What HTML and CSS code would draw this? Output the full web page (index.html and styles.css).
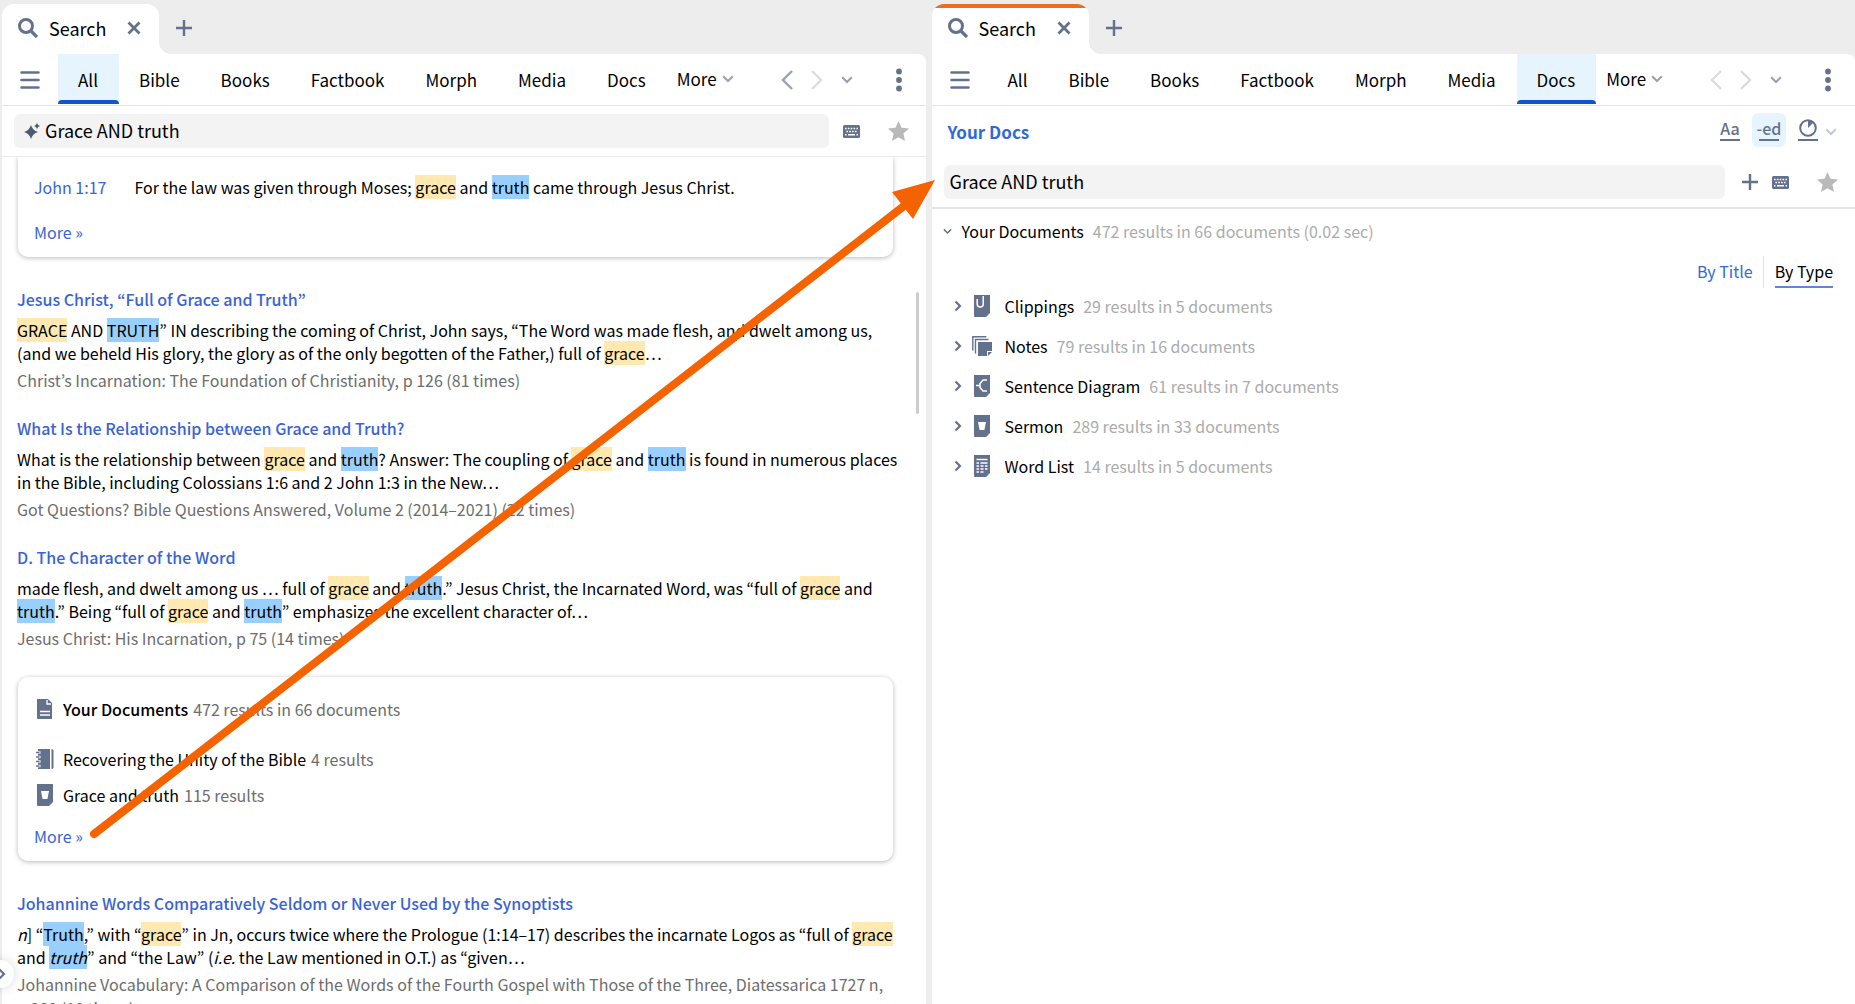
FILE: index.html
```html
<!DOCTYPE html>
<html lang="en">
<head>
<meta charset="utf-8">
<title>Search</title>
<link rel="stylesheet" href="styles.css">
</head>
<body>
<svg class="sprite" aria-hidden="true">
  <symbol id="i-search" viewBox="0 0 20 20"><circle cx="8" cy="8" r="6.5" fill="none" stroke="currentColor" stroke-width="3"/><path d="M13 13l6 6" stroke="currentColor" stroke-width="3.2" fill="none"/></symbol>
  <symbol id="i-close" viewBox="0 0 14 14"><path d="M1.500 1.500l11 11M12.500 1.500l-11 11" stroke="currentColor" stroke-width="2.800" fill="none"/></symbol>
  <symbol id="i-plus" viewBox="0 0 16 16"><path d="M8 0v16M0 8h16" stroke="currentColor" stroke-width="2.400" fill="none"/></symbol>
  <symbol id="i-menu" viewBox="0 0 20 18"><path d="M1.500 1.500h17M1.500 9h17M1.500 16.500h17" stroke="currentColor" stroke-width="2.600" stroke-linecap="round" fill="none"/></symbol>
  <symbol id="i-down" viewBox="0 0 12 8"><path d="M1.200 1.200L6 6l4.800-4.800" stroke="currentColor" stroke-width="2" fill="none"/></symbol>
  <symbol id="i-next" viewBox="0 0 8 12"><path d="M1.500 1.500L6 6l-4.500 4.500" stroke="currentColor" stroke-width="2.200" fill="none"/></symbol>
  <symbol id="i-back" viewBox="0 0 12 20"><path d="M11 1L2 10l9 9" stroke="currentColor" stroke-width="2.400" fill="none"/></symbol>
  <symbol id="i-forward" viewBox="0 0 12 20"><path d="M1 1l9 9-9 9" stroke="currentColor" stroke-width="2.400" fill="none"/></symbol>
  <symbol id="i-dots" viewBox="0 0 6 24"><circle cx="3" cy="3.500" r="2.900"/><circle cx="3" cy="12" r="2.900"/><circle cx="3" cy="20.500" r="2.900"/></symbol>
  <symbol id="i-keyboard" viewBox="0 0 17 13"><rect width="17" height="13" rx="1.500"/><path d="M2 3.500h13" stroke="#fff" stroke-width="1.500" stroke-dasharray="1.600 1.250" fill="none"/><path d="M3.400 6.500h11" stroke="#fff" stroke-width="1.500" stroke-dasharray="1.600 1.250" fill="none"/><path d="M2 9.700h1.500M5 9.700h7M13.500 9.700H15" stroke="#fff" stroke-width="1.500" fill="none"/></symbol>
  <symbol id="i-star" viewBox="0 0 21 20"><path d="M10.500 0l3 6.800 7.500.8-5.600 5 1.600 7.400-6.500-3.800L4 20l1.600-7.400L0 7.600l7.500-.8z"/></symbol>
  <symbol id="i-sparkle" viewBox="0 0 16 16"><path d="M7 2q1.600 5.400 7 7-5.400 1.600-7 7-1.600-5.400-7-7 5.400-1.600 7-7z"/><path d="M13 0q.7 2.300 3 3-2.300.7-3 3-.7-2.300-3-3 2.300-.7 3-3z"/></symbol>
  <symbol id="i-doc" viewBox="0 0 18 22"><path d="M1 1h11l4 4v16H2q-1 0-1-1z"/><path d="M11 2v4h4" stroke="#fff" stroke-width="1.300" fill="none"/><path d="M4 13.500h10M4 17h10" stroke="#fff" stroke-width="1.500" fill="none"/></symbol>
  <symbol id="i-book" viewBox="0 0 18 22"><path d="M2 1h12v20H2zM15.500 1q2 0 2 1.500v17q0 1.500-2 1.500z"/><path d="M0 4.500h4.500M0 9h4.500M0 13.500h4.500M0 18h4.500" stroke="#fff" stroke-width="2.600" fill="none"/><path d="M0 4.500h3.500M0 9h3.500M0 13.500h3.500M0 18h3.500" stroke="currentColor" stroke-width="1.300" fill="none"/></symbol>
  <symbol id="i-sermon" viewBox="0 0 18 22"><path d="M1 0h16v18l-4 4H2q-1 0-1-1z"/><path d="M5 7h8l-1.600 8H6.600z" fill="#fff"/></symbol>
  <symbol id="i-clip" viewBox="0 0 18 22"><path d="M1 0h16v18l-4 4H2q-1 0-1-1z"/><path d="M4.200 4v5q0 3 3 3t3-3V1" stroke="#fff" stroke-width="1.500" fill="none"/></symbol>
  <symbol id="i-notes" viewBox="0 0 20 20"><path d="M6 6h14v9h-5v5H6zM16 16h4l-4 4z"/><path d="M3.500 17.500v-14h13M.8 14.500V.8h13.500" stroke="currentColor" stroke-width="1.400" fill="none"/></symbol>
  <symbol id="i-diagram" viewBox="0 0 18 22"><path d="M1 0h16v18l-4 4H2q-1 0-1-1z"/><path d="M3 10.500h4M14 5h-4l-3 3.500v4L10 16h4" stroke="#fff" stroke-width="1.500" fill="none"/></symbol>
  <symbol id="i-list" viewBox="0 0 18 22"><path d="M1 0h16v18l-4 4H2q-1 0-1-1z"/><path d="M3.500 4.500h11M3.500 8h2.500M7.500 8h7M3.500 11h2.500M7.500 11h3M12 11h2.500M3.500 14h2.500M7.500 14h3M12 14h2.500M3.500 17h2.500M7.500 17h3" stroke="#fff" stroke-width="1.400" fill="none"/></symbol>
  <symbol id="i-clock" viewBox="0 0 20 20"><circle cx="10" cy="10" r="7.800" fill="none" stroke="currentColor" stroke-width="2"/><path d="M10 2v8l5.500-5.500Q13 2 10 2z"/></symbol>
</svg>

<main class="workspace">
  <section class="panel">
    <header class="strip">
      <div class="tab">
        <svg class="ic s20"><use href="#i-search"/></svg><span class="tab-name">Search</span>
        <button class="plain" aria-label="Close tab"><svg class="ic s14"><use href="#i-close"/></svg></button>
      </div>
      <button class="plain add" aria-label="New tab"><svg class="ic s16"><use href="#i-plus"/></svg></button>
    </header>
    <nav class="nav">
      <button class="plain menu" aria-label="Menu"><svg class="ic menu-ic"><use href="#i-menu"/></svg></button>
      <a class="kind on" href="#">All</a><a class="kind" href="#">Bible</a><a class="kind" href="#">Books</a><a class="kind" href="#">Factbook</a><a class="kind" href="#">Morph</a><a class="kind" href="#">Media</a><a class="kind" href="#">Docs</a>
      <button class="plain more">More<svg class="ic down"><use href="#i-down"/></svg></button>
      <div class="history">
        <button class="plain" aria-label="Back"><svg class="ic arrow mid"><use href="#i-back"/></svg></button>
        <button class="plain" aria-label="Forward"><svg class="ic arrow faint"><use href="#i-forward"/></svg></button>
        <button class="plain" aria-label="History"><svg class="ic down"><use href="#i-down"/></svg></button>
        <button class="plain dots" aria-label="Panel menu"><svg class="ic dots-ic"><use href="#i-dots"/></svg></button>
      </div>
    </nav>
    <div class="query">
      <label class="field"><svg class="ic s16"><use href="#i-sparkle"/></svg><input aria-label="Search" value="Grace AND truth"></label>
      <button class="plain" aria-label="Keyboard"><svg class="ic kb"><use href="#i-keyboard"/></svg></button>
      <button class="plain fav" aria-label="Favorite"><svg class="ic star"><use href="#i-star"/></svg></button>
    </div>
    <div class="results">
      <section class="card cut">
        <div class="verse"><a href="#">John 1:17</a><span>For the law was given through Moses; <mark>grace</mark> and <mark class="b">truth</mark> came through Jesus Christ.</span></div>
        <a class="all" href="#">More »</a>
      </section>
      <article class="hit">
        <h2><a href="#">Jesus Christ, “Full of Grace and Truth”</a></h2>
        <p><mark>GRACE</mark> AND <mark class="b">TRUTH</mark>” IN describing the coming of Christ, John says, “The Word was made flesh, and dwelt among us, (and we beheld His glory, the glory as of the only begotten of the Father,) full of <mark>grace</mark>…</p>
        <footer>Christ’s Incarnation: The Foundation of Christianity, p 126 (81 times)</footer>
      </article>
      <article class="hit">
        <h2><a href="#">What Is the Relationship between Grace and Truth?</a></h2>
        <p>What is the relationship between <mark>grace</mark> and <mark class="b">truth</mark>? Answer: The coupling of <mark>grace</mark> and <mark class="b">truth</mark> is found in numerous places in the Bible, including Colossians 1:6 and 2 John 1:3 in the New…</p>
        <footer>Got Questions? Bible Questions Answered, Volume 2 (2014–2021) (22 times)</footer>
      </article>
      <article class="hit">
        <h2><a href="#">D. The Character of the Word</a></h2>
        <p>made flesh, and dwelt among us … full of <mark>grace</mark> and <mark class="b">truth</mark>.” Jesus Christ, the Incarnated Word, was “full of <mark>grace</mark> and <mark class="b">truth</mark>.” Being “full of <mark>grace</mark> and <mark class="b">truth</mark>” emphasizes the excellent character of…</p>
        <footer>Jesus Christ: His Incarnation, p 75 (14 times)</footer>
      </article>
      <section class="card docs">
        <h3 class="doc"><svg class="ic page"><use href="#i-doc"/></svg><span>Your Documents</span><small>472 results in 66 documents</small></h3>
        <div class="doc first"><svg class="ic page"><use href="#i-book"/></svg><span>Recovering the Unity of the Bible</span><small>4 results</small></div>
        <div class="doc"><svg class="ic page"><use href="#i-sermon"/></svg><span>Grace and truth</span><small>115 results</small></div>
        <a class="all" href="#">More »</a>
      </section>
      <article class="hit">
        <h2><a href="#">Johannine Words Comparatively Seldom or Never Used by the Synoptists</a></h2>
        <p><i>n</i>] “<mark class="b">Truth</mark>,” with “<mark>grace</mark>” in Jn, occurs twice where the Prologue (1:14–17) describes the incarnate Logos as “full of <mark>grace</mark> and <mark class="b"><i>truth</i></mark>” and “the Law” (<i>i.e.</i> the Law mentioned in O.T.) as “given…</p>
        <footer>Johannine Vocabulary: A Comparison of the Words of the Fourth Gospel with Those of the Three, Diatessarica 1727 n, p&nbsp;380 (10 times)</footer>
      </article>
      <div class="thumb"></div>
    </div>
  </section>

  <section class="panel">
    <header class="strip">
      <div class="tab active">
        <svg class="ic s20"><use href="#i-search"/></svg><span class="tab-name">Search</span>
        <button class="plain" aria-label="Close tab"><svg class="ic s14"><use href="#i-close"/></svg></button>
      </div>
      <button class="plain add" aria-label="New tab"><svg class="ic s16"><use href="#i-plus"/></svg></button>
    </header>
    <nav class="nav">
      <button class="plain menu" aria-label="Menu"><svg class="ic menu-ic"><use href="#i-menu"/></svg></button>
      <a class="kind" href="#">All</a><a class="kind" href="#">Bible</a><a class="kind" href="#">Books</a><a class="kind" href="#">Factbook</a><a class="kind" href="#">Morph</a><a class="kind" href="#">Media</a><a class="kind on" href="#">Docs</a>
      <button class="plain more">More<svg class="ic down"><use href="#i-down"/></svg></button>
      <div class="history">
        <button class="plain" aria-label="Back"><svg class="ic arrow faint"><use href="#i-back"/></svg></button>
        <button class="plain" aria-label="Forward"><svg class="ic arrow faint"><use href="#i-forward"/></svg></button>
        <button class="plain" aria-label="History"><svg class="ic down"><use href="#i-down"/></svg></button>
        <button class="plain dots" aria-label="Panel menu"><svg class="ic dots-ic"><use href="#i-dots"/></svg></button>
      </div>
    </nav>
    <div class="scope">
      <a class="scope-name" href="#">Your Docs</a>
      <div class="options">
        <button class="plain opt"><span>Aa</span></button>
        <button class="plain opt lit"><span>-ed</span></button>
        <button class="plain opt" aria-label="Recency"><span><svg class="ic s20"><use href="#i-clock"/></svg></span></button>
      </div>
      <button class="plain" aria-label="Options"><svg class="ic down pale"><use href="#i-down"/></svg></button>
    </div>
    <div class="query second">
      <label class="field"><input aria-label="Search documents" value="Grace AND truth"></label>
      <button class="plain" aria-label="Add"><svg class="ic s16"><use href="#i-plus"/></svg></button>
      <button class="plain" aria-label="Keyboard"><svg class="ic kb"><use href="#i-keyboard"/></svg></button>
      <button class="plain fav" aria-label="Favorite"><svg class="ic star"><use href="#i-star"/></svg></button>
    </div>
    <div class="tree">
      <div class="root"><svg class="ic caret-down"><use href="#i-down"/></svg><span>Your Documents</span><small>472 results in 66 documents (0.02 sec)</small></div>
      <div class="sort"><a href="#">By Title</a><a class="chosen" href="#">By Type</a></div>
      <ul>
        <li><svg class="ic caret"><use href="#i-next"/></svg><svg class="ic kind-ic"><use href="#i-clip"/></svg><span>Clippings</span><small>29 results in 5 documents</small></li>
        <li><svg class="ic caret"><use href="#i-next"/></svg><svg class="ic kind-ic"><use href="#i-notes"/></svg><span>Notes</span><small>79 results in 16 documents</small></li>
        <li><svg class="ic caret"><use href="#i-next"/></svg><svg class="ic kind-ic"><use href="#i-diagram"/></svg><span>Sentence Diagram</span><small>61 results in 7 documents</small></li>
        <li><svg class="ic caret"><use href="#i-next"/></svg><svg class="ic kind-ic"><use href="#i-sermon"/></svg><span>Sermon</span><small>289 results in 33 documents</small></li>
        <li><svg class="ic caret"><use href="#i-next"/></svg><svg class="ic kind-ic"><use href="#i-list"/></svg><span>Word List</span><small>14 results in 5 documents</small></li>
      </ul>
    </div>
  </section>
</main>

<button class="plain expander" aria-label="Expand sidebar"><svg class="ic caret"><use href="#i-next"/></svg></button>
<svg class="pointer" viewBox="0 0 1855 1004" preserveAspectRatio="none" aria-hidden="true"><path d="M94 834L904 206" stroke="#f56300" stroke-width="8" stroke-linecap="round"/><path d="M935 180l-43 12 21 27z" fill="#f56300"/></svg>
</body>
</html>
```
FILE: styles.css
```css
* { box-sizing: border-box; }
body {
  margin: 0;
  height: 100vh;
  overflow: hidden;
  background: #ededed;
  color: #000;
  font: 16px/23px "Noto Sans CJK KR", "Noto Sans", sans-serif;
}
a { color: #3a63d4; text-decoration: none; }
h2, h3, p, ul { margin: 0; padding: 0; }
small { font-size: inherit; font-weight: 400; }
.sprite { position: absolute; width: 0; height: 0; }
.ic { display: block; flex: none; fill: currentColor; }
.s20 { width: 20px; height: 20px; }
.s16 { width: 16px; height: 16px; }
.s14 { width: 14px; height: 14px; }
.plain { border: 0; background: none; padding: 0; margin: 0; color: #64718c; font: inherit; display: flex; align-items: center; }

.workspace { height: 100%; display: grid; grid-template-columns: 1fr 1fr; gap: 6px; padding-left: 2px; }
.panel { display: flex; flex-direction: column; min-width: 0; min-height: 0; }

.strip { flex: none; height: 54px; padding-top: 4px; display: flex; color: #64718c; }
.tab { position: relative; width: 157px; padding: 0 18px 2px 16px; display: flex; align-items: center; background: #fff; border-radius: 12px 12px 0 0; }
.tab::after { content: ""; position: absolute; left: 100%; bottom: 0; width: 12px; height: 12px; background: radial-gradient(circle at 100% 0, transparent 12px, #fff 12px); }
.tab.active { background: linear-gradient(#ee6c1a 4px, #fff 4px); }
.tab-name { margin: 0 auto 0 11px; color: #000; font-size: 18px; }
.add { margin-left: 17px; padding-bottom: 2px; }

.nav { flex: none; height: 52px; display: flex; align-items: stretch; padding: 0 24px 0 18px; background: #fff; border-bottom: 1px solid #e4e4e4; border-radius: 0 8px 0 0; font-size: 17px; }
.menu { margin-right: 18px; }
.menu-ic { width: 20px; height: 18px; }
.kind { display: flex; align-items: center; padding: 0 21px 0 20px; height: 50px; color: #000; }
.kind.on { background: linear-gradient(#e6f4fe, #e6f4fe) no-repeat 0 0 / 100% 48px; position: relative; }
.kind.on::after { content: ""; position: absolute; left: 0; right: 0; bottom: 0; height: 4px; border-radius: 4px 4px 0 0; background: #0f55cc; }
.more { margin-left: 10px; padding-bottom: 2px; gap: 5px; color: #000; }
.down { width: 12px; height: 8px; color: #98a1b2; }
.history { margin-left: auto; display: flex; gap: 18px; }
.arrow { width: 12px; height: 20px; }
.mid { color: #98a1b2; }
.faint { color: #d9dce2; }
.dots { margin-left: 25px; }
.dots-ic { width: 6px; height: 24px; }

.query { flex: none; height: 51px; display: flex; align-items: center; padding: 0 17px 0 12px; background: #fff; border-bottom: 1px solid #ebebeb; }
.field { flex: 1; height: 34px; margin-right: 14px; padding: 0 10px; display: flex; align-items: center; gap: 5px; background: #f3f3f3; border-radius: 6px; color: #4d5a70; }
.field input { flex: 1; min-width: 0; height: 30px; border: 0; padding: 0 0 2px; background: none; outline: 0; color: #000; font: inherit; font-size: 18px; }
.kb { width: 17px; height: 13px; }
.fav { margin-left: 28px; color: #b9b9b9; }
.star { width: 21px; height: 20px; }

.results { position: relative; flex: 1; min-height: 0; overflow: hidden; padding: 0 33px 0 16px; background: #fff; }
.card { border-radius: 10px; background: #fff; box-shadow: 0 1px 5px rgba(0, 0, 0, .28); padding: 0 16px; }
.cut { border-radius: 0 0 10px 10px; padding-top: 19px; padding-bottom: 13px; margin-bottom: 30px; }
.verse { display: flex; gap: 28px; }
.all { display: block; width: max-content; line-height: 24px; }
.cut .all { margin-top: 21px; }
.hit { margin: 0 -8px 24px -1px; }
h2 { font-size: 16px; line-height: 24px; font-weight: 500; margin-bottom: 8px; }
.hit footer { margin-top: 3px; line-height: 24px; color: #6d6d6d; }
mark { background: #ffe9b0; color: inherit; }
mark.b { background: #99cffc; }
.docs { margin: 27px 0 30px; padding: 20px 16px 13px; }
.doc { display: flex; align-items: center; line-height: 24px; margin-bottom: 12px; }
h3.doc { font-size: 16px; font-weight: 500; margin-bottom: 26px; }
.doc .ic { width: 18px; height: 22px; margin-right: 9px; margin-left: 2px; color: #64718c; }
.doc small { margin-left: 5px; color: #6d6d6d; }
.docs .all { margin-top: 17px; }
.thumb { position: absolute; right: 7px; top: 135px; width: 3px; height: 122px; border-radius: 2px; background: #ccc; }

.scope { flex: none; height: 51px; padding: 0 18px 0 16px; display: flex; align-items: center; background: #fff; }
.scope-name { margin-right: auto; color: #2f6ad9; font-size: 17px; font-weight: 700; }
.options { display: flex; gap: 5px; padding-bottom: 3px; }
.opt { width: 34px; height: 34px; justify-content: center; border-radius: 6px; font-size: 16px; font-weight: 500; white-space: nowrap; }
.opt span { width: 20px; height: 22px; line-height: 18px; display: flex; justify-content: center; border-bottom: 2px solid currentColor; }
.opt span .ic { margin-top: -1px; }
.lit { background: #e6f4fe; }
.pale { color: #c3c8d6; }
.second { height: 52px; border-bottom: 2px solid #e4e4e4; }
.second .field { padding: 0 6px; margin-right: 17px; }
.second .kb { margin-left: 14px; }

.tree { flex: 1; background: #fff; padding: 10px 22px 0 11px; }
.tree small { margin-left: 9px; color: #ababab; }
.root { display: flex; align-items: center; line-height: 24px; }
.caret-down { width: 9px; height: 7px; margin-right: 10px; color: #64718c; }
.sort { display: flex; justify-content: flex-end; margin-top: 13px; line-height: 30px; }
.sort a { height: 32px; color: #2f6ad9; padding-right: 10px; }
.sort .chosen { color: #000; margin-left: 11px; padding: 0; border-bottom: 2px solid #5f86dc; }
.sort a:first-child { border-right: 1px solid #dedede; }
.tree ul { list-style: none; margin-top: -2px; }
.tree li { height: 40px; display: flex; align-items: center; padding-left: 11px; }
.caret { width: 8px; height: 12px; color: #64718c; }
.kind-ic { width: 20px; height: 22px; margin: 0 13px 0 10px; color: #64718c; }

.expander { position: absolute; left: -14px; bottom: 16px; width: 28px; height: 28px; border-radius: 50%; background: #fff; box-shadow: 0 0 12px rgba(0, 0, 0, .15); justify-content: flex-end; padding-right: 8px; }
.pointer { position: absolute; inset: 0; width: 100%; height: 100%; pointer-events: none; }
```
